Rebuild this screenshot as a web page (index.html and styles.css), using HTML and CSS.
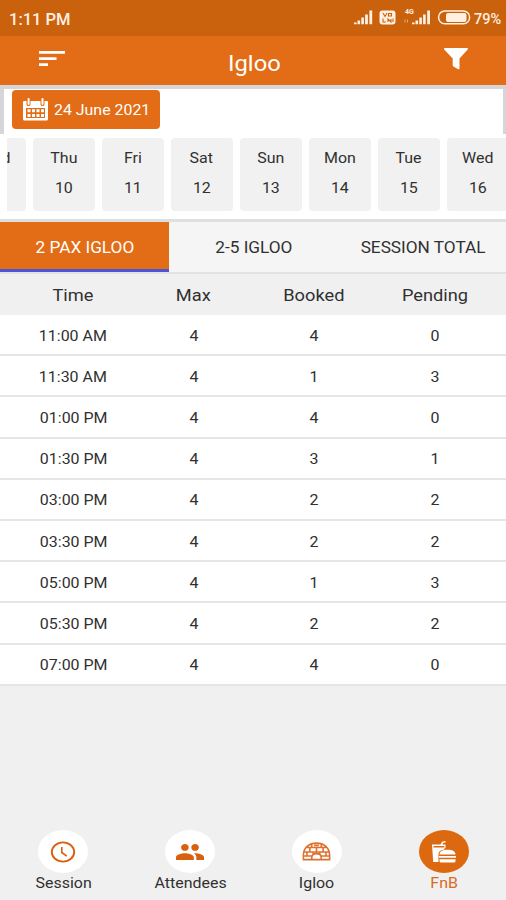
FILE: index.html
```html
<!DOCTYPE html>
<html lang="en">
<head>
<meta charset="utf-8">
<title>Igloo</title>
<link rel="stylesheet" href="styles.css">
</head>
<body>
<div class="status">
  <span class="clock"><span class="w">1:11 PM</span></span>
  <svg class="status-icons" width="120" height="20" viewBox="0 0 120 20">
    <g fill="#fff0e2">
      <path d="M1 14.5h2.6v1.8H1zM4.5 12.5h2.6v3.8H4.5zM8.3 9.5h2.6v6.8H8.3zM12.1 6.5h2.8v9.8h-2.8zM16.4 2.6h2.8v13.7h-2.8z"/>
      <rect x="26.500" y="2.400" width="16" height="14" rx="3"/>
      <path d="M59 14.5h2.6v1.8H59zM62.5 12.5h2.6v3.8h-2.6zM66.3 9.5h2.6v6.8h-2.6zM70.1 6.5h2.6v9.8h-2.6zM74.2 2.6h2.8v13.7h-2.8z"/>
      <rect x="93" y="5" width="20.500" height="9" rx="2"/>
    </g>
    <path d="M30 5l2 3.500 2-3.500M35.500 8V5.500h3V8zM30 10.500v3.500h3M35 14v-3l3 3v-3M40 10.500V14" fill="none" stroke="#ca620d" stroke-width="1.100"/>
    <text class="net" x="52" y="5.500">4G</text>
    <path d="M52 11.500v3M54.500 11.500v3" stroke="#e9a56c" stroke-width="1"/>
    <rect x="85.600" y="3" width="31" height="12.800" rx="6.200" fill="none" stroke="#fff0e2" stroke-width="1.500"/>
  </svg>
  <span class="battery">79%</span>
</div>
<header class="bar">
  <svg class="menu" width="26" height="16" viewBox="0 0 26 16"><path fill="#fff" d="M0 0h26v2.800H0zM0 6.200h17.500V9H0zM0 12.300h9v2.700H0z"/></svg>
  <h1><span class="w">Igloo</span></h1>
  <svg class="filter" width="24" height="22" viewBox="0 0 24 22"><path fill="#fff" d="M.5 0h23q.8.800 0 1.700L15.500 10.500V20q0 2-1.800 1L9.500 18.500q-.8-.500-.8-1.500v-6.500L.4 1.700Q-.4.800.5 0z"/></svg>
</header>
<section class="date-box">
  <button class="date">
    <svg width="25" height="23" viewBox="0 0 25 23">
      <path fill="#fff" d="M1 3h2.500v3.500q0 1.500 2 1.500t2-1.500V3h10v3.500q0 1.500 2 1.500t2-1.500V3H24q1 0 1 1v17q0 1.500-1.500 1.500h-22Q0 22.500 0 21V4q0-1 1-1zM4.600 1q0-1 1-1t1 1v5q0 1-1 1t-1-1zM18.500 1q0-1 1-1t1 1v5q0 1-1 1t-1-1z"/>
      <path fill="#e26d16" d="M3 10h19v10H3z"/>
      <path fill="#fff" d="M4.500 11.300h3v3h-3zM9 11.300h3v3H9zM13.500 11.300h3v3h-3zM18 11.300h3v3h-3zM4.500 16h3v3h-3zM9 16h3v3H9zM13.500 16h3v3h-3zM18 16h3v3h-3z"/>
    </svg>
    <span class="w">24 June 2021</span>
  </button>
</section>
<section class="days">
  <div class="strip">
    <div class="day"><span class="w">Wed</span></div>
    <div class="day"><span class="w">Thu</span><span class="w">10</span></div>
    <div class="day"><span class="w">Fri</span><span class="w">11</span></div>
    <div class="day"><span class="w">Sat</span><span class="w">12</span></div>
    <div class="day"><span class="w">Sun</span><span class="w">13</span></div>
    <div class="day"><span class="w">Mon</span><span class="w">14</span></div>
    <div class="day"><span class="w">Tue</span><span class="w">15</span></div>
    <div class="day"><span class="w">Wed</span><span class="w">16</span></div>
  </div>
</section>
<nav class="tabs">
  <div class="tab active"><span class="w">2 PAX IGLOO</span></div>
  <div class="tab"><span class="w">2-5 IGLOO</span></div>
  <div class="tab"><span class="w">SESSION TOTAL</span></div>
</nav>
<main>
  <div class="row head"><span class="w">Time</span><span class="w">Max</span><span class="w">Booked</span><span class="w">Pending</span></div>
  <div class="row"><span class="w">11:00 AM</span><span class="w">4</span><span class="w">4</span><span class="w">0</span></div>
  <div class="row"><span class="w">11:30 AM</span><span class="w">4</span><span class="w">1</span><span class="w">3</span></div>
  <div class="row"><span class="w">01:00 PM</span><span class="w">4</span><span class="w">4</span><span class="w">0</span></div>
  <div class="row"><span class="w">01:30 PM</span><span class="w">4</span><span class="w">3</span><span class="w">1</span></div>
  <div class="row"><span class="w">03:00 PM</span><span class="w">4</span><span class="w">2</span><span class="w">2</span></div>
  <div class="row"><span class="w">03:30 PM</span><span class="w">4</span><span class="w">2</span><span class="w">2</span></div>
  <div class="row"><span class="w">05:00 PM</span><span class="w">4</span><span class="w">1</span><span class="w">3</span></div>
  <div class="row"><span class="w">05:30 PM</span><span class="w">4</span><span class="w">2</span><span class="w">2</span></div>
  <div class="row"><span class="w">07:00 PM</span><span class="w">4</span><span class="w">4</span><span class="w">0</span></div>
</main>
<footer class="bottom">
  <div class="item">
    <div class="disc"><svg width="26" height="22" viewBox="0 0 26 22" fill="none" stroke="#d9600f"><ellipse cx="13" cy="11" rx="11.200" ry="9.600" stroke-width="1.900"/><path d="M11.800 6v5.500l5 3.700" stroke-width="1.600"/></svg></div>
    <span class="w">Session</span>
  </div>
  <div class="item">
    <div class="disc"><svg width="28" height="16" viewBox="1 5 22 14" preserveAspectRatio="none" fill="#d9600f"><path d="M16 11c1.660 0 2.990-1.340 2.990-3S17.660 5 16 5s-3 1.340-3 3 1.340 3 3 3zm-8 0c1.660 0 2.990-1.340 2.990-3S9.660 5 8 5 5 6.340 5 8s1.340 3 3 3zm0 2c-2.330 0-7 1.170-7 3.500V19h14v-2.500c0-2.330-4.670-3.500-7-3.500zm8 0c-.29 0-.62.020-.97.050 1.160.84 1.970 1.970 1.970 3.450V19h6v-2.500c0-2.330-4.670-3.500-7-3.500z"/></svg></div>
    <span class="w">Attendees</span>
  </div>
  <div class="item">
    <div class="disc"><svg width="29" height="19" viewBox="0 0 30 20" fill="none" stroke="#df7130" stroke-width="1.700"><path d="M1.200 18.500V14C1.200 6 7 1.200 15 1.200S28.800 6 28.800 14v4.500H20v-2c0-3-2-4.300-5-4.300s-5 1.300-5 4.300v2zM10 18.500h10M5 5.800h20M2 10.500h26M1 14.800h9M20 14.800h9M10 2v4M20 2v4M15 5.800v6.500M8 6v4.500M22 6v4.500M5 10.500v4.300M11 10.500l1 2.500M25 10.500v4.300M19 10.500l-1 2.500M12.500 3.500h5"/></svg></div>
    <span class="w">Igloo</span>
  </div>
  <div class="item on">
    <div class="disc"><svg width="24" height="22" viewBox="0 0 24 22"><path fill="#fff" d="M0 3.500h8.500L10 .800 13.300 0l.5 1.200-2.700.8-.9 1.500h3.300V7h-1.200V5H1.500v1.500h11v2C8.500 9 6.500 10.500 6.500 13v8H1.200zM7.500 13.500C7.500 10 11 8.800 15.500 8.800s8 1.200 8 4.700zM7 15h17v1.800H7zM7.500 18.200h16V20q0 1.500-1.500 1.500H9q-1.500 0-1.500-1.500z"/></svg></div>
    <span class="w">FnB</span>
  </div>
</footer>
</body>
</html>
```

FILE: styles.css
```css
* { box-sizing: border-box; }
body {
  margin: 0;
  height: 900px;
  overflow: hidden;
  display: flex;
  flex-direction: column;
  background: #f0f0f0;
  color: #303030;
  font-family: Roboto, "Liberation Sans", sans-serif;
  font-size: 14px;
}
.w { display: inline-block; white-space: nowrap; transform: scaleX(1.14); }
.status {
  height: 36px;
  flex: none;
  display: flex;
  align-items: center;
  padding: 2px 4px 0 9px;
  background: #ca620d;
  color: #fff0e2;
}
.clock { flex: 1; font-size: 16.5px; font-weight: 500; }
.clock .w { transform: none; }
.status-icons { flex: none; margin: -2px 1px 0 0; }
.net { font-size: 7px; font-weight: 700; fill: #fff0e2; }
.battery { font-size: 14.5px; font-weight: 500; width: 28px; }
.bar {
  height: 49px;
  flex: none;
  display: flex;
  justify-content: space-between;
  align-items: flex-start;
  padding: 0 38px 0 39px;
  background: #e26d16;
  color: #fff;
}
.menu { margin-top: 15px; }
.filter { margin-top: 12px; }
h1 { margin: 15px 0 0; font-size: 22px; line-height: 26px; font-weight: 400; }
h1 .w { transform: scaleX(1.08); }
.date-box {
  height: 49px;
  flex: none;
  padding: 1px 8px;
  border: solid #d6d6d8;
  border-width: 4px 3px 0 4px;
  background: #fff;
}
.date {
  display: flex;
  align-items: center;
  gap: 6px;
  width: 148px;
  height: 39px;
  padding: 0 0 0 11px;
  border: 0;
  border-radius: 4px;
  background: #e26d16;
  color: #fff;
  font: 15px Roboto, sans-serif;
}
.date .w { transform: scaleX(1.06); transform-origin: left; }
.days { height: 88px; flex: none; background: #fff; padding: 3.5px 0 0 7px; border-bottom: 3px solid #dedfe1; }
.strip { display: flex; gap: 7px; overflow: hidden; }
.day {
  flex: none;
  width: 62px;
  height: 73px;
  padding-top: 12px;
  display: flex;
  flex-direction: column;
  align-items: center;
  gap: 13px;
  line-height: 17px;
  border-radius: 4px;
  background: #f1f1f1;
}
.day:first-child { margin-left: -43.5px; }
.tabs { height: 52px; flex: none; display: flex; background: #f5f5f5; border-bottom: 2px solid #e2e2e2; }
.tab { flex: 1; height: 50px; display: flex; align-items: center; justify-content: center; font-size: 16px; padding-left: 2px; }
.tab .w { transform: scaleX(1.075); }
.active { background: #e26d16; color: #fff; border-bottom: 3px solid #4c55d8; padding-top: 3px; }
.row {
  height: 41.2px;
  display: grid;
  grid-template-columns: repeat(4, 120.5px);
  padding: 2px 0 0 13px;
  align-items: center;
  justify-items: center;
  background: #fff;
  border-bottom: 2px solid #e5e5e5;
}
.head { height: 41px; background: #f0f0f0; border: 0; font-size: 16px; }
.bottom { margin-top: auto; height: 70px; flex: none; display: grid; grid-template-columns: repeat(4, 126.8px); }
.item { display: flex; flex-direction: column; align-items: center; gap: 2px; font-size: 14px; }
.disc { width: 50px; height: 43px; border-radius: 50%; background: #fff; display: flex; align-items: center; justify-content: center; }
.on { color: #dc6a1c; }
.on .disc { background: #dc680f; }
```
